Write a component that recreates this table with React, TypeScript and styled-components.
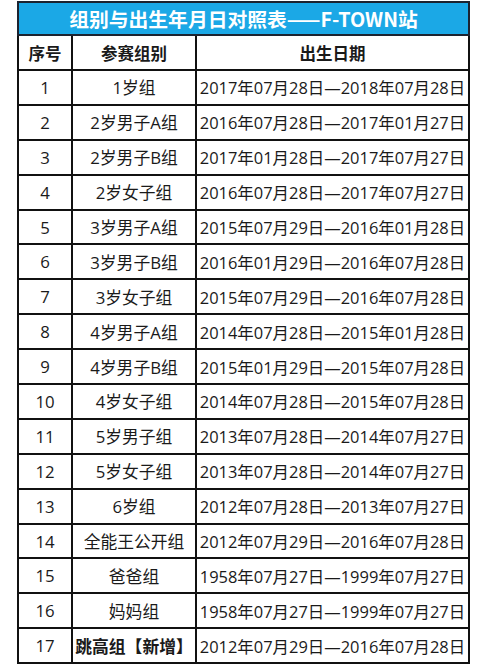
import React from 'react';
import styled, { createGlobalStyle } from 'styled-components';

const GlobalStyle = createGlobalStyle`
  html, body {
    margin: 0;
    padding: 0;
    background: #fff;
  }
`;

const Page = styled.div`
  width: 486px;
  height: 672px;
  padding: 1px 0 0 17px;
  box-sizing: border-box;
  font-family: "Open Sans", "Noto Sans CJK SC", sans-serif;
  color: #1a1a1a;
`;

const Table = styled.table`
  border-collapse: collapse;
  width: 451px;
  table-layout: fixed;
`;

const TitleCell = styled.th`
  background: #1ba8e6;
  color: #fff;
  font-family: "Noto Sans CJK SC", sans-serif;
  font-weight: 700;
  font-size: 19.8px;
  height: 31px;
  padding: 0;
  border: 2px solid #1c2330;
`;

const HeadCell = styled.th`
  font-family: "Noto Sans CJK SC", sans-serif;
  font-weight: 700;
  font-size: 16.5px;
  height: 33px;
  padding: 0;
  border: 2px solid #111;
  text-align: center;
`;

const Cell = styled.td<{ $bold?: boolean; $date?: boolean }>`
  height: 32.9px;
  padding: 0;
  border: 2px solid #111;
  text-align: center;
  font-size: ${p => (p.$date ? '16.45px' : '16.8px')};
  font-weight: ${p => (p.$bold ? 700 : 400)};
  font-family: ${p =>
    p.$bold ? '"Noto Sans CJK SC", sans-serif' : '"Open Sans", "Noto Sans CJK SC", sans-serif'};
  white-space: nowrap;
`;

const rows: [string, string][] = [
  ['1岁组', '2017年07月28日—2018年07月28日'],
  ['2岁男子A组', '2016年07月28日—2017年01月27日'],
  ['2岁男子B组', '2017年01月28日—2017年07月27日'],
  ['2岁女子组', '2016年07月28日—2017年07月27日'],
  ['3岁男子A组', '2015年07月29日—2016年01月28日'],
  ['3岁男子B组', '2016年01月29日—2016年07月28日'],
  ['3岁女子组', '2015年07月29日—2016年07月28日'],
  ['4岁男子A组', '2014年07月28日—2015年01月28日'],
  ['4岁男子B组', '2015年01月29日—2015年07月28日'],
  ['4岁女子组', '2014年07月28日—2015年07月28日'],
  ['5岁男子组', '2013年07月28日—2014年07月27日'],
  ['5岁女子组', '2013年07月28日—2014年07月27日'],
  ['6岁组', '2012年07月28日—2013年07月27日'],
  ['全能王公开组', '2012年07月29日—2016年07月28日'],
  ['爸爸组', '1958年07月27日—1999年07月27日'],
  ['妈妈组', '1958年07月27日—1999年07月27日'],
  ['跳高组【新增】', '2012年07月29日—2016年07月28日'],
];

const App: React.FC = () => (
  <>
    <GlobalStyle />
    <Page>
      <Table>
        <colgroup>
          <col style={{ width: 54 }} />
          <col style={{ width: 124 }} />
          <col style={{ width: 273 }} />
        </colgroup>
        <thead>
          <tr>
            <TitleCell colSpan={3}>组别与出生年月日对照表——F-TOWN站</TitleCell>
          </tr>
          <tr>
            <HeadCell>序号</HeadCell>
            <HeadCell>参赛组别</HeadCell>
            <HeadCell>出生日期</HeadCell>
          </tr>
        </thead>
        <tbody>
          {rows.map(([group, date], i) => (
            <tr key={i}>
              <Cell>{i + 1}</Cell>
              <Cell $bold={i === rows.length - 1}>{group}</Cell>
              <Cell $date>{date}</Cell>
            </tr>
          ))}
        </tbody>
      </Table>
    </Page>
  </>
);

export default App;
